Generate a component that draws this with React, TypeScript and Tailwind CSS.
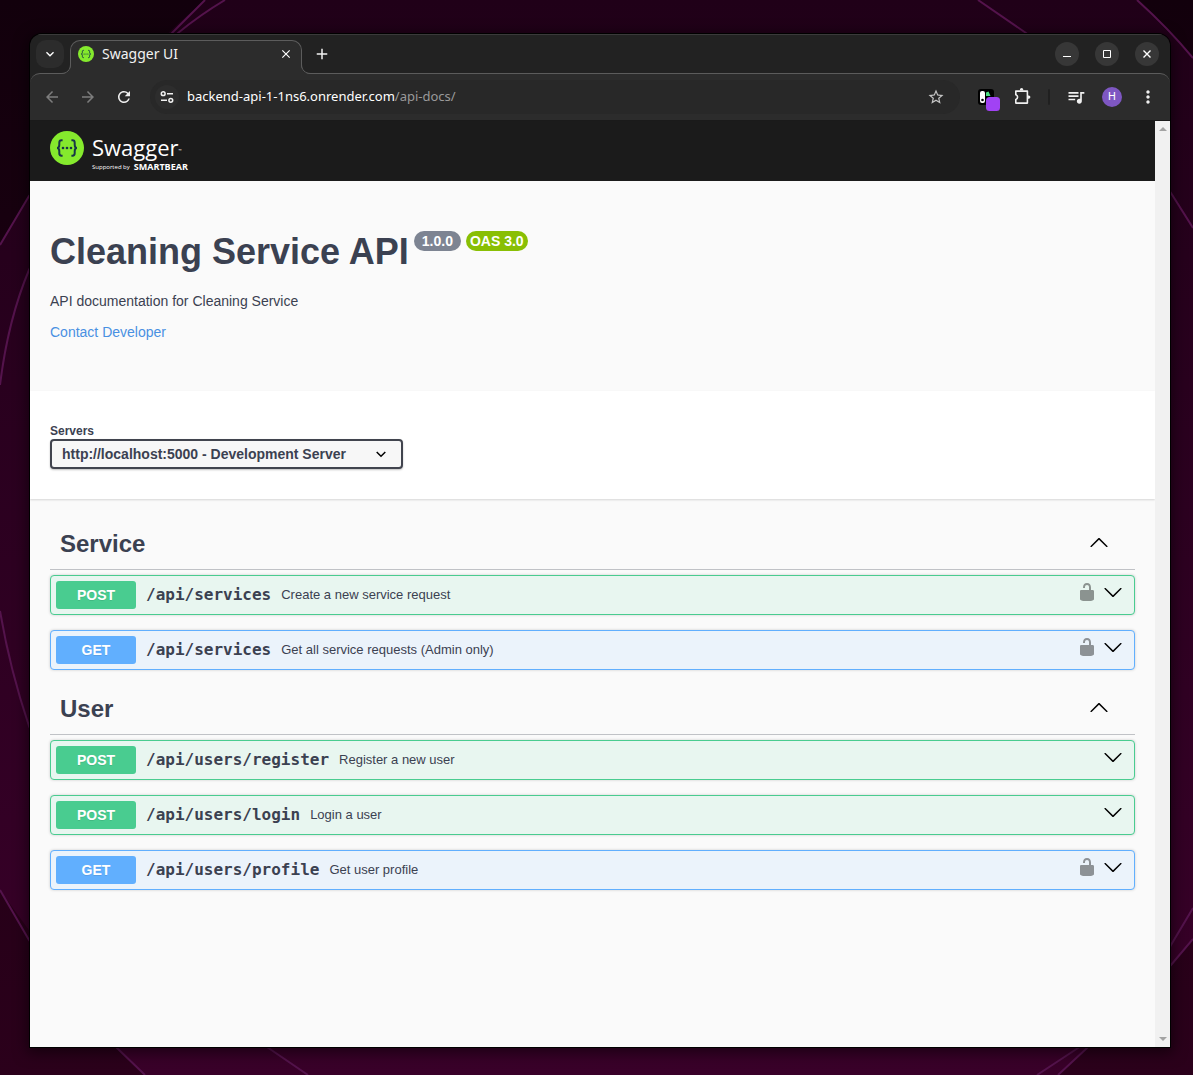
import { useState, type ReactNode } from "react";
import {
  MdArrowBack,
  MdArrowForward,
  MdRefresh,
  MdStarBorder,
  MdQueueMusic,
  MdMoreVert,
  MdKeyboardArrowDown,
  MdClose,
  MdAdd,
} from "react-icons/md";

type Method = "POST" | "GET";

interface Operation {
  method: Method;
  path: string;
  summary: string;
  secured: boolean;
}

interface Tag {
  name: string;
  operations: Operation[];
}

const tags: Tag[] = [
  {
    name: "Service",
    operations: [
      { method: "POST", path: "/api/services", summary: "Create a new service request", secured: true },
      { method: "GET", path: "/api/services", summary: "Get all service requests (Admin only)", secured: true },
    ],
  },
  {
    name: "User",
    operations: [
      { method: "POST", path: "/api/users/register", summary: "Register a new user", secured: false },
      { method: "POST", path: "/api/users/login", summary: "Login a user", secured: false },
      { method: "GET", path: "/api/users/profile", summary: "Get user profile", secured: true },
    ],
  },
];

const rowStyles: Record<Method, string> = {
  POST: "border-[#49cc90] bg-[#e8f6f0]",
  GET: "border-[#61affe] bg-[#ebf3fb]",
};

const methodStyles: Record<Method, string> = {
  POST: "bg-[#49cc90]",
  GET: "bg-[#61affe]",
};

function Wallpaper() {
  return (
    <svg
      className="absolute inset-0 h-full w-full"
      viewBox="0 0 1193 1075"
      preserveAspectRatio="none"
      aria-hidden="true"
    >
      <defs>
        <linearGradient id="sky" x1="0" y1="0" x2="0" y2="1">
          <stop offset="0" stopColor="#12000c" />
          <stop offset="1" stopColor="#2b001b" />
        </linearGradient>
        <linearGradient id="disc" x1="0" y1="0" x2="0" y2="1">
          <stop offset="0" stopColor="#200018" />
          <stop offset="1" stopColor="#390029" />
        </linearGradient>
      </defs>
      <rect width="1193" height="1075" fill="url(#sky)" />
      <path
        d="M205 0Q100 90 29 196L0 245V890Q50 960 116 1047L145 1075H1058L1087 1048Q1140 1000 1193 939V58L1137 0Z"
        fill="url(#disc)"
      />
      <g fill="none" stroke="#54134c" strokeWidth="2">
        <path d="M205 0L172 33Q90 115 29 196L0 245" />
        <path d="M225 0Q200 15 178 33Q80 140 29 270Q8 320 0 385" />
        <path d="M0 611Q10 670 29 726Q100 900 267 1047L308 1075" />
        <path d="M0 890L29 940Q70 1000 116 1047L145 1075" />
        <path d="M978 0L1026 33Q1110 100 1171 193L1193 228" />
        <path d="M1137 0Q1168 28 1193 58" />
        <path d="M1193 908L1171 945Q1140 1005 1078 1048L1037 1075" />
        <path d="M1193 939L1171 965Q1130 1010 1087 1048L1058 1075" />
      </g>
    </svg>
  );
}

function SwaggerMark({ className }: { className: string }) {
  return (
    <svg className={className} viewBox="0 0 34 34" aria-hidden="true">
      <circle cx="17" cy="17" r="17" fill="#85ea2d" />
      <g fill="none" stroke="#173647" strokeWidth="2">
        <path d="M12.6 9.3h-1.1c-1.7 0-2.2 1-2.2 2.4v2.1c0 2-.8 3.2-2.3 3.2 1.5 0 2.3 1.2 2.3 3.2v2.1c0 1.4.5 2.4 2.2 2.4h1.1" />
        <path d="M21.4 9.3h1.1c1.7 0 2.2 1 2.2 2.4v2.1c0 2 .8 3.2 2.3 3.2-1.5 0-2.3 1.2-2.3 3.2v2.1c0 1.4-.5 2.4-2.2 2.4h-1.1" />
      </g>
      <g fill="#173647">
        <circle cx="13" cy="17" r="1.3" />
        <circle cx="17" cy="17" r="1.3" />
        <circle cx="21" cy="17" r="1.3" />
      </g>
    </svg>
  );
}

function ToolButton({ label, children }: { label: string; children: ReactNode }) {
  return (
    <button
      type="button"
      aria-label={label}
      className="flex size-9 shrink-0 items-center justify-center rounded-full text-[#f0f0f0]"
    >
      {children}
    </button>
  );
}

function WindowButton({ label, children }: { label: string; children: ReactNode }) {
  return (
    <button
      type="button"
      aria-label={label}
      className="flex size-6 items-center justify-center rounded-full bg-[#373737] text-white"
    >
      <svg className="size-6" viewBox="0 0 24 24" fill="none" stroke="currentColor" aria-hidden="true">
        {children}
      </svg>
    </button>
  );
}

function TabStrip() {
  return (
    <div className="flex h-[39px] items-start border-t border-[#3a3a3a] bg-[#222222] pt-[5px]">
      <button
        type="button"
        aria-label="Search tabs"
        className="ml-1.5 flex size-7 items-center justify-center rounded-[10px] bg-[#2c2c2c] text-white"
      >
        <MdKeyboardArrowDown className="size-4" />
      </button>
      <div className="relative z-10 ml-1.5 flex h-[34px] w-[232px] items-center rounded-t-[10px] border border-b-0 border-[#5c5c5c] bg-[#2c2c2c] pr-[7px] pb-2 pl-[7px]">
        <svg className="absolute bottom-0 -left-[10px] size-[10px]" viewBox="0 0 10 10" aria-hidden="true">
          <path d="M0 10C6 10 10 6 10 0V10Z" fill="#2c2c2c" />
          <path d="M0 9.5C6 9.5 9.5 6 9.5 0" fill="none" stroke="#5c5c5c" />
        </svg>
        <svg className="absolute -right-[10px] bottom-0 size-[10px]" viewBox="0 0 10 10" aria-hidden="true">
          <path d="M10 10C4 10 0 6 0 0V10Z" fill="#2c2c2c" />
          <path d="M10 9.5C4 9.5 .5 6 .5 0" fill="none" stroke="#5c5c5c" />
        </svg>
        <SwaggerMark className="size-4" />
        <span className="ml-2 flex-1 font-['Noto_Sans','Open_Sans',sans-serif] text-sm text-[#f2f2f2]">
          Swagger UI
        </span>
        <button type="button" aria-label="Close tab" className="flex size-4 items-center justify-center text-white">
          <MdClose className="size-3.5" />
        </button>
      </div>
      <button
        type="button"
        aria-label="New tab"
        className="ml-1.5 flex size-7 items-center justify-center text-[#f2f2f2]"
      >
        <MdAdd className="size-[18px]" />
      </button>
      <div className="mt-0.5 mr-[11px] ml-auto flex gap-4">
        <WindowButton label="Minimize">
          <path d="M8 14.5h8" />
        </WindowButton>
        <WindowButton label="Maximize">
          <path d="M8.5 8.5h7v7h-7z" />
        </WindowButton>
        <WindowButton label="Close">
          <path d="M8.5 8.5l7 7M15.5 8.5l-7 7" strokeWidth="1.4" />
        </WindowButton>
      </div>
    </div>
  );
}

function Toolbar() {
  return (
    <div className="bg-[#222222]">
      <div className="flex h-12 items-center rounded-t-[10px] border-t border-b border-t-[#5c5c5c] border-b-[#1a1a1a] bg-[#2c2c2c] px-1">
        <button
          type="button"
          aria-label="Back"
          disabled
          className="flex size-9 items-center justify-center text-[#7d7d7d]"
        >
          <MdArrowBack className="size-[18px]" />
        </button>
        <button
          type="button"
          aria-label="Forward"
          disabled
          className="flex size-9 items-center justify-center text-[#7d7d7d]"
        >
          <MdArrowForward className="size-[18px]" />
        </button>
        <ToolButton label="Reload">
          <MdRefresh className="size-[18px]" />
        </ToolButton>
        <div className="mx-2 flex h-[34px] min-w-0 flex-1 items-center rounded-full bg-[#282828] pr-[15px] pl-[5px]">
          <button
            type="button"
            aria-label="View site information"
            className="flex size-6 shrink-0 items-center justify-center rounded-full bg-[#2d2d2d] text-[#f0f0f0]"
          >
            <svg
              className="size-4"
              viewBox="0 0 16 16"
              fill="none"
              stroke="currentColor"
              strokeWidth="1.5"
              aria-hidden="true"
            >
              <circle cx="4.2" cy="4.7" r="1.9" />
              <path d="M8 4.7h6M2 11.3h6" />
              <circle cx="11.8" cy="11.3" r="1.9" />
            </svg>
          </button>
          <a
            href="#api-docs"
            className="ml-2 flex-1 truncate font-['Noto_Sans','Open_Sans',sans-serif] text-[13px] text-white"
          >
            backend-api-1-1ns6.onrender.com<span className="text-[#9a9a9a]">/api-docs/</span>
          </a>
          <button type="button" aria-label="Bookmark this page" className="text-[#c4c4c4]">
            <MdStarBorder className="size-[18px]" />
          </button>
        </div>
        <ToolButton label="Clipboard extension">
          <svg className="size-6 overflow-visible" viewBox="0 0 24 24" aria-hidden="true">
            <rect x="4" y="4" width="16" height="16" rx="3" fill="#000" />
            <rect x="6" y="6" width="5" height="12" rx="2" fill="#fff" />
            <circle cx="8.5" cy="15" r="1.3" fill="#000" />
            <path d="M12 7.5l2.5-1 2 4.5H12z" fill="#4ade80" />
            <rect x="12" y="12" width="14" height="14" rx="3.5" fill="#a142f4" />
          </svg>
        </ToolButton>
        <ToolButton label="Extensions">
          <svg
            className="size-[18px]"
            viewBox="0 0 18 18"
            fill="none"
            stroke="currentColor"
            strokeWidth="1.6"
            strokeLinejoin="round"
            aria-hidden="true"
          >
            <path d="M2.8 3.1h11.6v12H2.8v-3.6a2.5 2.5 0 0 0 0-4.8z" />
            <path d="M6.9 2.6V1.7a1.7 1.7 0 0 1 3.4 0v.9zM15 7.5h.8a1.6 1.6 0 0 1 0 3.2H15z" fill="currentColor" stroke="none" />
          </svg>
        </ToolButton>
        <div className="mx-2 h-4 w-0.5 rounded-full bg-[#202020]" />
        <ToolButton label="Control your music, videos and more">
          <MdQueueMusic className="size-5" />
        </ToolButton>
        <ToolButton label="Profile">
          <span className="flex size-5 items-center justify-center rounded-full bg-[#7e57c2] font-['Roboto',sans-serif] text-[11px] leading-5 text-white">
            H
          </span>
        </ToolButton>
        <ToolButton label="Menu">
          <MdMoreVert className="size-5" />
        </ToolButton>
      </div>
    </div>
  );
}

function Lock() {
  return (
    <svg className="size-5" viewBox="0 0 20 20" fill="#000" fillOpacity="0.4" aria-hidden="true">
      <path d="M15.8 8H14V5.6C14 2.703 12.665 1 10 1 7.334 1 6 2.703 6 5.6V6h2v-.801C8 3.754 8.797 3 10 3c1.203 0 2 .754 2 2.199V8H4c-.553 0-1 .646-1 1.199V17c0 .549.428 1.139.951 1.307l1.197.387C5.672 18.861 6.55 19 7.1 19h5.8c.549 0 1.428-.139 1.951-.307l1.196-.387c.524-.167.953-.757.953-1.306V9.199C17 8.646 16.352 8 15.8 8z" />
    </svg>
  );
}

function Arrow({ up }: { up: boolean }) {
  return (
    <svg className="size-5" viewBox="0 0 20 20" fill="#000" aria-hidden="true">
      {up ? (
        <path d="M17.418 14.908c.272.268.709.268.979 0s.271-.701 0-.969l-7.908-7.83c-.27-.268-.707-.268-.979 0l-7.908 7.83c-.27.268-.27.701 0 .969.271.268.709.268.979 0L10 7.767l7.418 7.141z" />
      ) : (
        <path d="M17.418 6.109c.272-.268.709-.268.979 0s.271.701 0 .969l-7.908 7.83c-.27.268-.707.268-.979 0l-7.908-7.83c-.27-.268-.27-.701 0-.969.271-.268.709-.268.979 0L10 13.25l7.418-7.141z" />
      )}
    </svg>
  );
}

function OperationRow({ operation }: { operation: Operation }) {
  const { method, path, summary, secured } = operation;
  return (
    <div
      className={`mb-[15px] flex items-center rounded border p-[5px] shadow-[0_0_3px_rgba(0,0,0,0.19)] ${rowStyles[method]}`}
    >
      <button type="button" className="flex min-w-0 flex-1 items-center text-left">
        <span
          className={`w-20 shrink-0 rounded-[3px] text-center text-sm leading-7 font-bold text-white [text-shadow:0_1px_0_rgba(0,0,0,0.1)] ${methodStyles[method]}`}
        >
          {method}
        </span>
        <span className="px-2.5 font-['DejaVu_Sans_Mono',monospace] text-base leading-6 font-bold">{path}</span>
        <span className="text-[13px]">{summary}</span>
      </button>
      <div className="flex gap-1.5 pr-1.5 pb-1.5">
        {secured && (
          <button type="button" aria-label="Authorization button unlocked">
            <Lock />
          </button>
        )}
        <button type="button" aria-label={`Expand ${method} ${path}`}>
          <Arrow up={false} />
        </button>
      </div>
    </div>
  );
}

function TagSection({ tag }: { tag: Tag }) {
  const [open, setOpen] = useState(true);
  return (
    <section>
      <h3 className="mb-[5px] border-b border-[#3b4151]/30">
        <button
          type="button"
          aria-expanded={open}
          onClick={() => setOpen(!open)}
          className="flex h-[49px] w-full items-center justify-between pr-[26px] pb-0.5 pl-2.5 text-left text-2xl font-bold"
        >
          {tag.name}
          <span className="pb-1">
            <Arrow up={open} />
          </span>
        </button>
      </h3>
      {open && tag.operations.map((op) => <OperationRow key={op.method + op.path} operation={op} />)}
    </section>
  );
}

function Scrollbar() {
  return (
    <div className="flex w-[15px] shrink-0 flex-col items-center justify-between bg-[#f1f1f1] py-1.5" aria-hidden="true">
      <svg className="h-1 w-2" viewBox="0 0 8 4" fill="#a3a3a3">
        <path d="M0 4l4-4 4 4z" />
      </svg>
      <svg className="h-1 w-2" viewBox="0 0 8 4" fill="#a3a3a3">
        <path d="M0 0l4 4 4-4z" />
      </svg>
    </div>
  );
}

function SwaggerPage() {
  return (
    <main className="min-w-0 flex-1 bg-[#fafafa] font-['Liberation_Sans',Arial,sans-serif] text-[#3b4151]">
      <header className="bg-[#1b1b1b] px-5 py-2.5">
        <a href="#top" className="flex h-10 items-start gap-2 text-white">
          <SwaggerMark className="size-[34px]" />
          <span className="flex flex-col font-['Open_Sans',sans-serif]">
            <span className="flex items-end text-[22px] leading-8">
              Swagger<span className="text-[4px] leading-6">™</span>
            </span>
            <span className="flex items-center gap-1 leading-2">
              <span className="text-[6px]">Supported by</span>
              <span className="text-[9px] font-bold">SMARTBEAR</span>
            </span>
          </span>
        </a>
      </header>

      <div className="px-5 pt-[50px] pb-12">
        <div className="flex items-start gap-[5px]">
          <h2 className="text-4xl leading-[42px] font-bold">Cleaning Service API</h2>
          <span className="rounded-full bg-[#7d8492] px-2 text-sm leading-5 font-bold text-white">1.0.0</span>
          <span className="rounded-full bg-[#89bf04] px-1 text-sm leading-5 font-bold text-white">OAS 3.0</span>
        </div>
        <p className="mt-[18px] text-sm">API documentation for Cleaning Service</p>
        <a href="#contact" className="mt-[11px] block text-sm text-[#4990e2]">
          Contact Developer
        </a>
      </div>

      <div className="mt-px bg-white px-5 pt-8 pb-[30px] shadow-[0_1px_2px_rgba(0,0,0,0.15)]">
        <label htmlFor="servers" className="block text-xs font-bold">
          Servers
        </label>
        <div className="relative w-[353px] max-w-full">
          <select
            id="servers"
            className="h-[30px] w-full appearance-none rounded border-2 border-[#41444e] bg-[#f7f7f7] pr-10 pl-2.5 text-sm leading-5 font-bold shadow-[0_1px_2px_rgba(0,0,0,0.25)]"
          >
            <option>http://localhost:5000 - Development Server</option>
          </select>
          <svg
            className="pointer-events-none absolute top-[11px] right-[17px] h-2 w-2.5"
            viewBox="0 0 10 8"
            fill="none"
            stroke="#000"
            strokeWidth="1.5"
            aria-hidden="true"
          >
            <path d="M.7 2L5 6.3 9.3 2" />
          </svg>
        </div>
      </div>

      <div className="px-5 pt-[21px] pb-6">
        {tags.map((tag) => (
          <TagSection key={tag.name} tag={tag} />
        ))}
      </div>
    </main>
  );
}

export default function App() {
  return (
    <div className="relative flex min-h-screen flex-col pt-[34px] pr-[23px] pb-7 pl-[30px]">
      <Wallpaper />
      <div className="relative flex flex-1 flex-col overflow-hidden rounded-t-xl shadow-[0_0_0_1px_#000,0_3px_14px_3px_rgba(0,0,0,0.5)]">
        <TabStrip />
        <Toolbar />
        <div className="flex flex-1">
          <SwaggerPage />
          <Scrollbar />
        </div>
      </div>
    </div>
  );
}
